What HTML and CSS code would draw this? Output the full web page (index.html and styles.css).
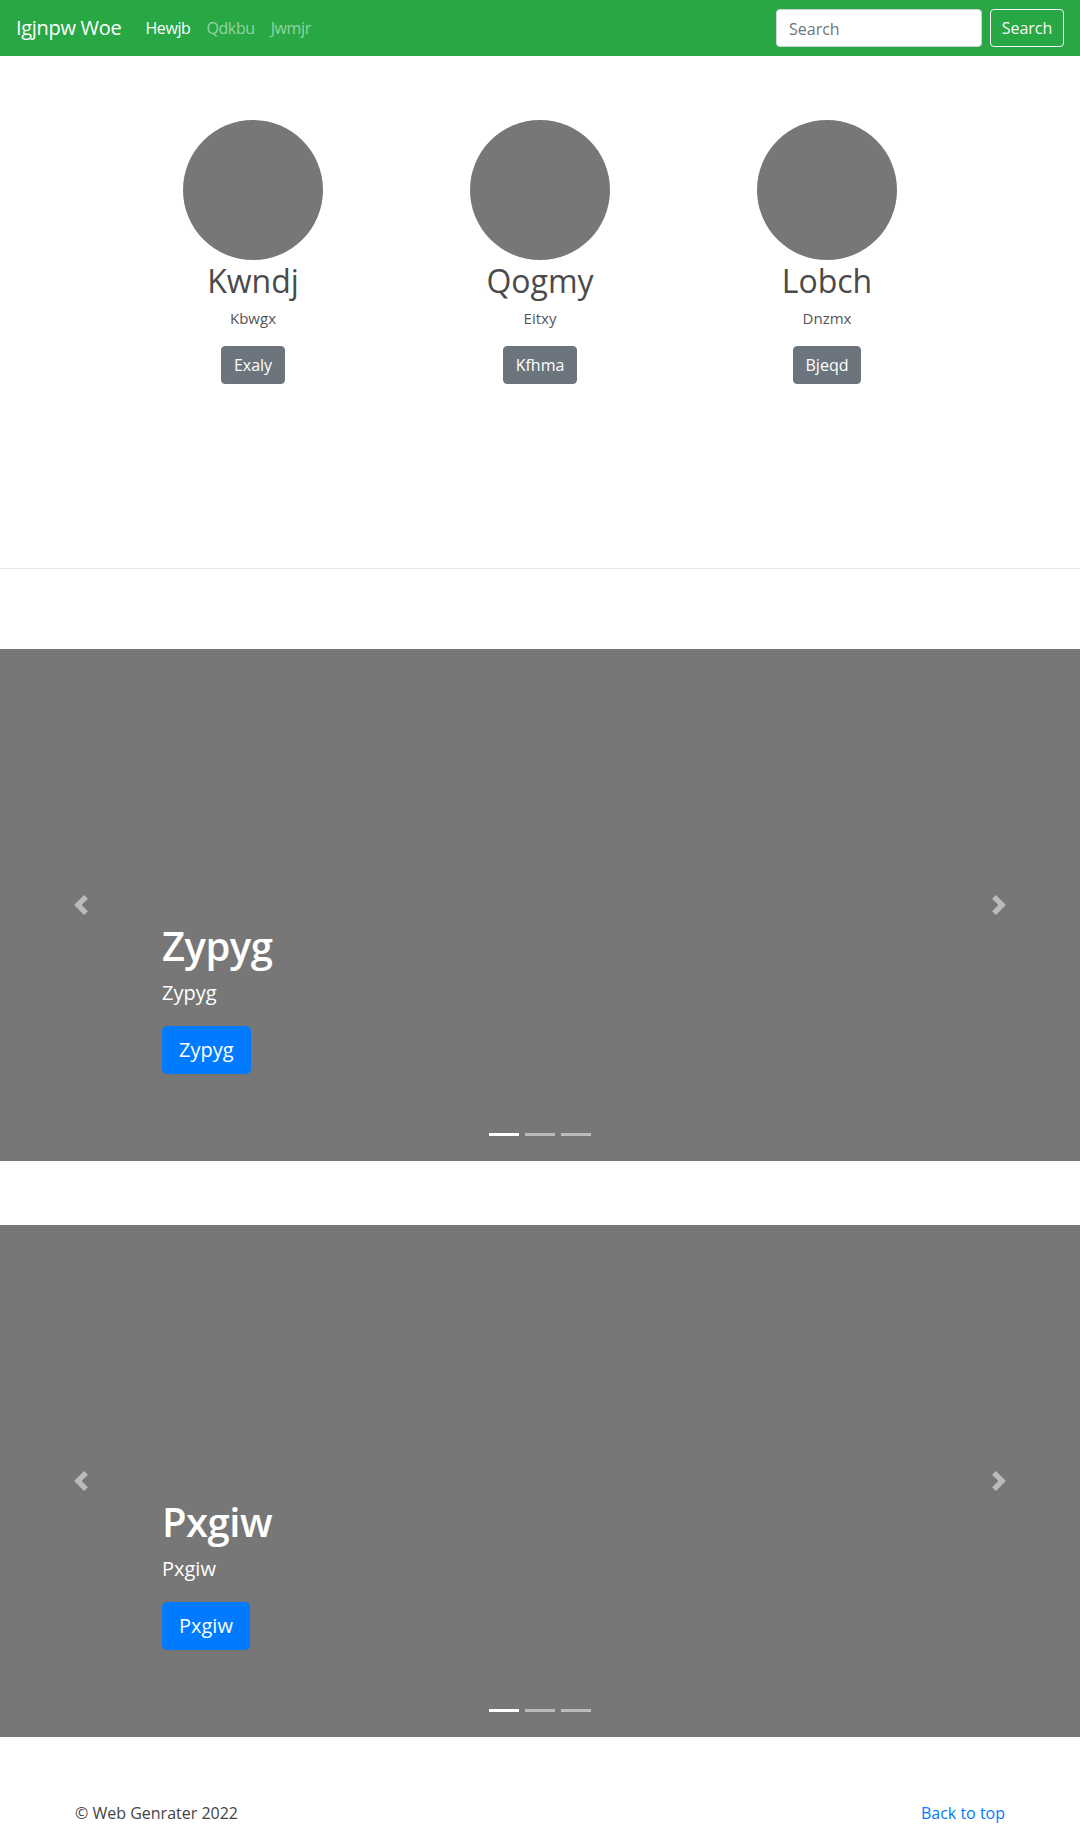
FILE: index.html
```html
<!DOCTYPE html>
<html lang="en">
<head>
<meta charset="utf-8">
<title>Igjnpw Woe</title>
<link rel="stylesheet" href="styles.css">
</head>
<body>
<header class="navbar">
  <a class="brand" href="#">Igjnpw Woe</a>
  <nav class="nav">
    <a class="nav-link active" href="#">Hewjb</a>
    <a class="nav-link" href="#">Qdkbu</a>
    <a class="nav-link" href="#">Jwmjr</a>
  </nav>
  <form class="search">
    <input class="search-input" type="text" placeholder="Search">
    <button class="search-btn" type="button">Search</button>
  </form>
</header>

<main>
  <section class="marketing">
    <div class="cols">
      <div class="col">
        <div class="avatar"></div>
        <h2 class="col-title">Kwndj</h2>
        <p class="col-text">Kbwgx</p>
        <a class="btn-gray" href="#">Exaly</a>
      </div>
      <div class="col">
        <div class="avatar"></div>
        <h2 class="col-title">Qogmy</h2>
        <p class="col-text">Eitxy</p>
        <a class="btn-gray" href="#">Kfhma</a>
      </div>
      <div class="col">
        <div class="avatar"></div>
        <h2 class="col-title">Lobch</h2>
        <p class="col-text">Dnzmx</p>
        <a class="btn-gray" href="#">Bjeqd</a>
      </div>
    </div>
  </section>

  <hr class="divider">

  <section class="carousel">
    <div class="caption">
      <h1 class="cap-title">Zypyg</h1>
      <p class="cap-text">Zypyg</p>
      <a class="btn-blue" href="#">Zypyg</a>
    </div>
    <a class="control prev" href="#"><svg viewBox="0 0 8 8" width="20" height="20"><path d="M5.25 0l-4 4 4 4 1.5-1.5L4.25 4l2.5-2.5L5.25 0z"/></svg></a>
    <a class="control next" href="#"><svg viewBox="0 0 8 8" width="20" height="20"><path d="M2.75 0l-1.5 1.5L3.75 4l-2.5 2.5L2.75 8l4-4-4-4z"/></svg></a>
    <ol class="indicators">
      <li class="on"></li>
      <li></li>
      <li></li>
    </ol>
  </section>

  <section class="carousel">
    <div class="caption">
      <h1 class="cap-title">Pxgiw</h1>
      <p class="cap-text">Pxgiw</p>
      <a class="btn-blue" href="#">Pxgiw</a>
    </div>
    <a class="control prev" href="#"><svg viewBox="0 0 8 8" width="20" height="20"><path d="M5.25 0l-4 4 4 4 1.5-1.5L4.25 4l2.5-2.5L5.25 0z"/></svg></a>
    <a class="control next" href="#"><svg viewBox="0 0 8 8" width="20" height="20"><path d="M2.75 0l-1.5 1.5L3.75 4l-2.5 2.5L2.75 8l4-4-4-4z"/></svg></a>
    <ol class="indicators">
      <li class="on"></li>
      <li></li>
      <li></li>
    </ol>
  </section>
</main>

<footer class="footer">
  <p class="copy">&copy; Web Genrater 2022</p>
  <a class="top-link" href="#">Back to top</a>
</footer>
</body>
</html>
```

FILE: styles.css
```css
* { box-sizing: border-box; }

html, body {
  margin: 0;
  padding: 0;
}

body {
  font-family: "Open Sans", "Noto Sans", "Liberation Sans", sans-serif;
  font-size: 16px;
  line-height: 1.5;
  color: #444;
  background: #fff;
}

a { text-decoration: none; }

/* Navbar */
.navbar {
  height: 56px;
  background: #28a745;
  display: flex;
  align-items: center;
  padding: 0 16px;
}

.brand {
  color: #fff;
  font-size: 20px;
  line-height: 30px;
  letter-spacing: -0.3px;
  margin-right: 16px;
}

.nav {
  display: flex;
}

.nav-link {
  color: rgba(255, 255, 255, 0.5);
  padding: 8px;
  font-size: 16px;
  line-height: 24px;
  letter-spacing: -0.4px;
}

.nav-link.active { color: #fff; }

.search {
  margin-left: auto;
  display: flex;
  align-items: center;
}

.search-input {
  width: 206px;
  height: 38px;
  border: 1px solid #ced4da;
  border-radius: 4px;
  padding: 7px 12px 5px;
  font-family: inherit;
  font-size: 16px;
  color: #495057;
  background: #fff;
  margin-right: 8px;
}

.search-input::placeholder { color: #6c757d; }

.search-btn {
  width: 74px;
  height: 38px;
  border: 1px solid #f8f9fa;
  border-radius: 4px;
  background: transparent;
  color: #f8f9fa;
  font-family: inherit;
  font-size: 16px;
  padding: 0;
}

/* Marketing */
.marketing {
  padding-top: 64px;
}

.cols {
  display: grid;
  grid-template-columns: repeat(3, 287px);
  justify-content: center;
}

.col {
  display: flex;
  flex-direction: column;
  align-items: center;
}

.avatar {
  width: 140px;
  height: 140px;
  border-radius: 50%;
  background: #777;
}

.col-title {
  margin: 5px 0 0;
  font-size: 32px;
  line-height: 32px;
  font-weight: 400;
  color: #4a4a4a;
}

.col-text {
  margin: 9px 0 0;
  font-size: 15px;
  line-height: 24px;
  color: #555;
}

.btn-gray {
  margin-top: 16px;
  display: inline-block;
  height: 38px;
  padding: 6px 12px;
  line-height: 24px;
  font-size: 16px;
  color: #fff;
  background: #6c757d;
  border: 1px solid #6c757d;
  border-radius: 4px;
}

.divider {
  margin: 184px 0 80px;
  border: 0;
  border-top: 1px solid rgba(0, 0, 0, 0.1);
  height: 0;
}

/* Carousel */
.carousel {
  position: relative;
  height: 512px;
  background: #777;
  margin-bottom: 64px;
  display: flex;
  flex-direction: column;
  justify-content: flex-end;
  padding: 0 15% 87px;
}

.caption {
  display: flex;
  flex-direction: column;
  align-items: flex-start;
  color: #fff;
  position: relative;
  z-index: 2;
}

.cap-title {
  margin: 0 0 8px;
  font-size: 40px;
  line-height: 48px;
  font-weight: 600;
  letter-spacing: -0.5px;
}

.cap-text {
  margin: 0 0 18px;
  font-size: 20px;
  line-height: 30px;
}

.btn-blue {
  display: inline-block;
  height: 48px;
  padding: 8px 16px;
  font-size: 20px;
  line-height: 30px;
  color: #fff;
  background: #007bff;
  border: 1px solid #007bff;
  border-radius: 4.8px;
}

.control {
  position: absolute;
  top: 0;
  bottom: 0;
  width: 15%;
  display: flex;
  align-items: center;
  justify-content: center;
  opacity: 0.5;
  z-index: 1;
}

.control svg { fill: #fff; display: block; }

.control.prev { left: 0; }
.control.next { right: 0; }

.indicators {
  position: absolute;
  left: 0;
  right: 0;
  bottom: 25px;
  margin: 0;
  padding: 0;
  list-style: none;
  display: flex;
  justify-content: center;
  gap: 6px;
  z-index: 3;
}

.indicators li {
  width: 30px;
  height: 3px;
  background: #fff;
  opacity: 0.5;
}

.indicators li.on { opacity: 1; }

/* Footer */
.footer {
  width: 930px;
  margin: 0 auto;
  display: flex;
  justify-content: space-between;
  align-items: flex-start;
}

.copy {
  margin: 0 0 16px;
  color: #444;
}

.top-link {
  color: #007bff;
}
```
